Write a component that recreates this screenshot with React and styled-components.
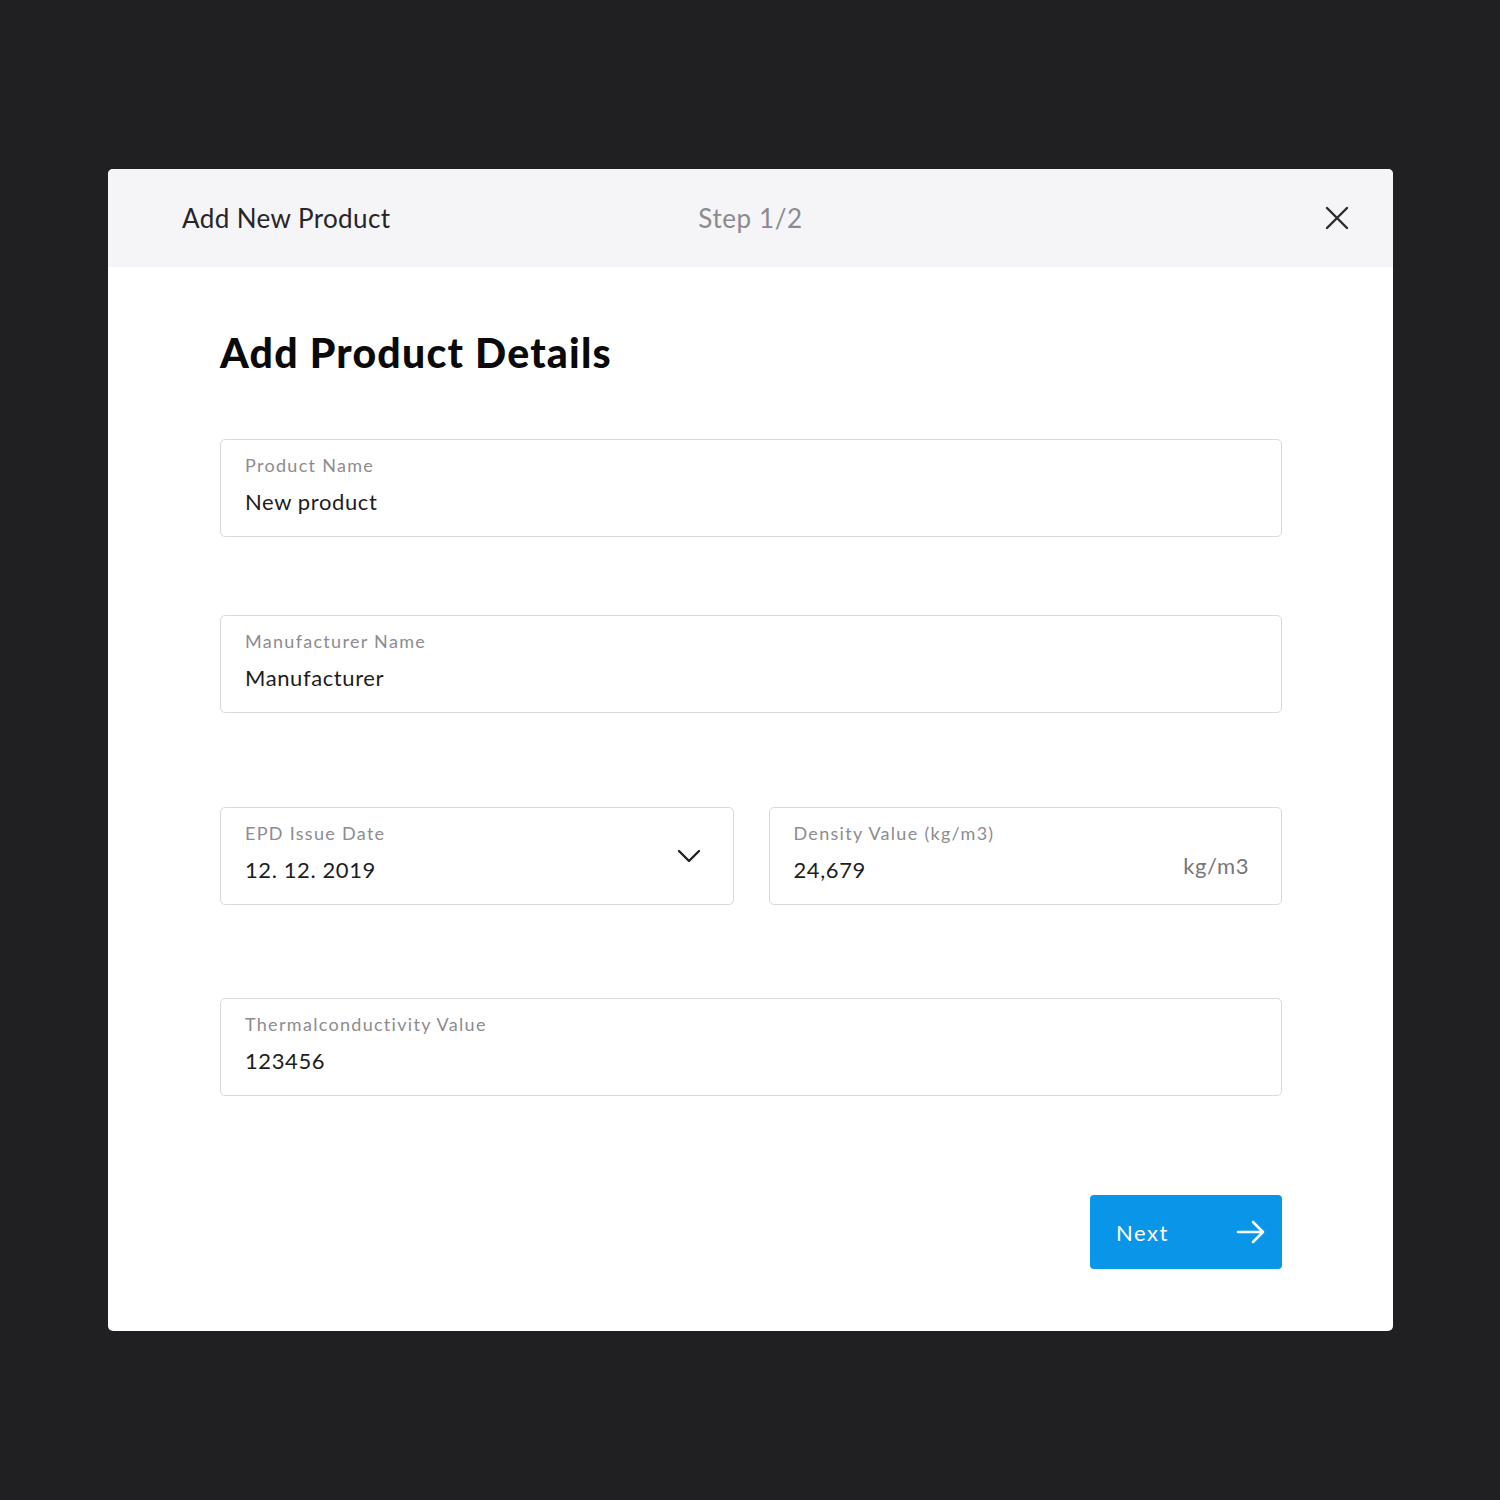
import React from "react";
import styled, { createGlobalStyle } from "styled-components";

const Global = createGlobalStyle`
  html, body { margin: 0; padding: 0; background: #201f22; }
  body { font-family: Lato, "Noto Sans", "Liberation Sans", sans-serif; }
  * { box-sizing: border-box; }
`;

const Page = styled.div`
  width: 1500px;
  height: 1500px;
  padding: 169px 107px 0 108px;
  background: #201f22;
`;

const Modal = styled.div`
  width: 1285px;
  height: 1162px;
  background: #ffffff;
  border-radius: 5px;
  overflow: hidden;
  display: flex;
  flex-direction: column;
`;

const Header = styled.div`
  height: 98px;
  background: #f5f4f7;
  display: grid;
  grid-template-columns: 1fr auto 1fr;
  align-items: center;
  padding: 0 44px;
`;

const HeaderTitle = styled.div`
  font-size: 26px;
  color: #262528;
  letter-spacing: 0.4px;
  padding-left: 30px;
`;

const StepText = styled.div`
  font-size: 26px;
  color: #8b8a8e;
  letter-spacing: 0.6px;
`;

const CloseBtn = styled.button`
  justify-self: end;
  background: none;
  border: none;
  padding: 0;
  width: 24px;
  height: 24px;
  cursor: pointer;
  display: flex;
`;

const Body = styled.div`
  padding: 62px 111px 0 112px;
  display: flex;
  flex-direction: column;
`;

const Heading = styled.h1`
  margin: 0;
  font-size: 41px;
  font-weight: 900;
  color: #0a0a0a;
  line-height: 48px;
  letter-spacing: 1.2px;
`;

const Field = styled.div`
  height: 98px;
  border: 1px solid #dadadc;
  border-radius: 5px;
  padding: 14px 32px 0 24px;
  display: flex;
  align-items: center;
  justify-content: space-between;
  margin-top: ${(p) => p.$mt}px;
  flex: ${(p) => (p.$grow ? 1 : "none")};
`;

const FieldText = styled.div`
  display: flex;
  flex-direction: column;
  align-self: stretch;
`;

const Label = styled.div`
  font-size: 18px;
  color: #8d8c90;
  letter-spacing: 1.3px;
  line-height: 22px;
`;

const Value = styled.div`
  font-size: 22px;
  color: #1e1d20;
  letter-spacing: 0.6px;
  margin-top: 13px;
  line-height: 26px;
`;

const Unit = styled.div`
  font-size: 22px;
  color: #77767a;
  letter-spacing: 0.6px;
  margin-top: 4px;
`;

const ChevronWrap = styled.div`
  display: flex;
  margin-bottom: 14px;
`;

const Row = styled.div`
  display: flex;
  gap: 35px;
  margin-top: ${(p) => p.$mt}px;
`;

const Footer = styled.div`
  display: flex;
  justify-content: flex-end;
  margin-top: 99px;
`;

const NextBtn = styled.button`
  width: 192px;
  height: 74px;
  background: #0a96e8;
  border: none;
  border-radius: 4px;
  color: #ffffff;
  display: flex;
  align-items: center;
  justify-content: space-between;
  padding: 0 16px 0 26px;
  font-family: inherit;
  font-size: 22px;
  letter-spacing: 1.5px;
  cursor: pointer;
`;

const CloseIcon = () => (
  <svg width="24" height="24" viewBox="0 0 24 24" fill="none" stroke="#2a292c" strokeWidth="2.4" strokeLinecap="round">
    <path d="M2 2 L22 22 M22 2 L2 22" />
  </svg>
);

const Chevron = () => (
  <ChevronWrap>
    <svg width="24" height="14" viewBox="0 0 24 14" fill="none" stroke="#222" strokeWidth="2.4" strokeLinecap="round" strokeLinejoin="round">
      <path d="M2 2 L12 12 L22 2" />
    </svg>
  </ChevronWrap>
);

const Arrow = () => (
  <svg width="30" height="24" viewBox="0 0 30 24" fill="none" stroke="#fff" strokeWidth="2.6" strokeLinecap="round" strokeLinejoin="round">
    <path d="M2 12 H27 M17 2 L27 12 L17 22" />
  </svg>
);

const InputField = ({ label, value, mt, grow, right }) => (
  <Field $mt={mt} $grow={grow}>
    <FieldText>
      <Label>{label}</Label>
      <Value>{value}</Value>
    </FieldText>
    {right}
  </Field>
);

export default function App() {
  return (
    <>
      <Global />
      <Page>
        <Modal>
          <Header>
            <HeaderTitle>Add New Product</HeaderTitle>
            <StepText>Step 1/2</StepText>
            <CloseBtn aria-label="Close">
              <CloseIcon />
            </CloseBtn>
          </Header>
          <Body>
            <Heading>Add Product Details</Heading>
            <InputField mt={62} label="Product Name" value="New product" />
            <InputField mt={78} label="Manufacturer Name" value="Manufacturer" />
            <Row $mt={94}>
              <InputField grow label="EPD Issue Date" value="12. 12. 2019" right={<Chevron />} />
              <InputField grow label="Density Value (kg/m3)" value="24,679" right={<Unit>kg/m3</Unit>} />
            </Row>
            <InputField mt={93} label="Thermalconductivity Value" value="123456" />
            <Footer>
              <NextBtn>
                Next
                <Arrow />
              </NextBtn>
            </Footer>
          </Body>
        </Modal>
      </Page>
    </>
  );
}
